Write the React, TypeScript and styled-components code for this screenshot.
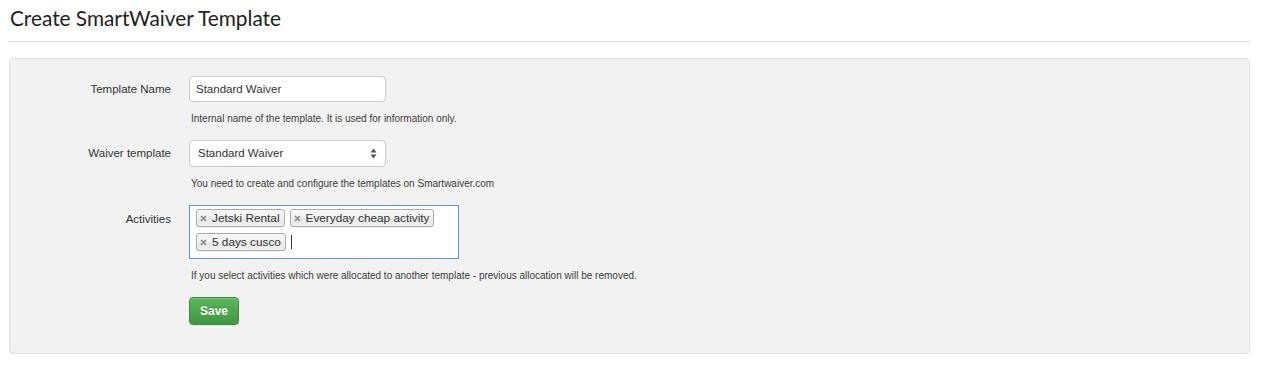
import React from "react";
import styled, { createGlobalStyle } from "styled-components";

const GlobalStyle = createGlobalStyle`
  body {
    margin: 0;
    background: #fff;
    font-family: "Liberation Sans", Arial, sans-serif;
    color: #333;
  }
`;

const Page = styled.div`
  padding: 0 12px 0 9px;
`;

const Title = styled.h2`
  margin: 0;
  padding: 3px 0 0 1px;
  height: 38px;
  font-family: Lato, "Open Sans", sans-serif;
  font-weight: 400;
  font-size: 20.8px;
  line-height: 30px;
  color: #222;
  border-bottom: 1px solid #dcdcdc;
`;

const Panel = styled.div`
  margin-top: 16px;
  background: #f2f2f2;
  border: 1px solid #e0e0e0;
  border-radius: 4px;
  padding: 17px 0 28px;
`;

const Form = styled.form`
  display: grid;
  grid-template-columns: 161px 1fr;
  column-gap: 18px;
  row-gap: 13px;
`;

const Label = styled.label<{ top?: number }>`
  text-align: right;
  font-size: 11.5px;
  line-height: ${(p) => (p.top ? "15px" : "26px")};
  padding-top: ${(p) => p.top ?? 0}px;
  color: #333;
`;

const Control = styled.div`
  display: flex;
  flex-direction: column;
  align-items: flex-start;
`;

const TextInput = styled.div`
  box-sizing: border-box;
  width: 197px;
  height: 26px;
  padding: 0 6px;
  background: #fff;
  border: 1px solid #c8c8c8;
  border-radius: 4px;
  font-size: 11.5px;
  line-height: 24px;
  color: #333;
`;

const SelectBox = styled(TextInput)`
  height: 27px;
  line-height: 25px;
  padding: 0 8px;
  display: flex;
  justify-content: space-between;
  align-items: center;
`;

const Help = styled.div`
  margin-top: 9px;
  font-size: 10px;
  line-height: 16px;
  color: #3c3c3c;
  padding-left: 2px;
`;

const Choices = styled.div`
  box-sizing: border-box;
  width: 270px;
  height: 54px;
  padding: 0 0 0 6px;
  background: #fff;
  border: 1px solid #5897fb;
  display: flex;
  flex-wrap: wrap;
  align-content: flex-start;
  align-items: center;
`;

const Tag = styled.span`
  display: inline-flex;
  align-items: center;
  gap: 5px;
  height: 18px;
  box-sizing: border-box;
  margin: 3px 5px 3px 0;
  padding: 0 4px 0 3px;
  border: 1px solid #aaa;
  border-radius: 3px;
  background: linear-gradient(#f4f4f4 20%, #f0f0f0 50%, #e8e8e8 52%, #eee 100%);
  box-shadow: 0 0 2px #fff inset, 0 1px 0 rgba(0, 0, 0, 0.05);
  font-size: 11.8px;
  line-height: 16px;
  color: #333;
`;

const Caret = styled.span`
  width: 1px;
  height: 14px;
  margin-left: 0;
  background: #333;
`;

const SaveButton = styled.button`
  margin-top: 0;
  width: 50px;
  height: 28px;
  border: 1px solid #3e8f3e;
  border-radius: 4px;
  background: linear-gradient(#5cb85c, #419641);
  color: #fff;
  font-family: "Liberation Sans", Arial, sans-serif;
  font-weight: 700;
  font-size: 12px;
  text-shadow: 0 -1px 0 rgba(0, 0, 0, 0.2);
  box-shadow: inset 0 1px 0 rgba(255, 255, 255, 0.15), 0 1px 1px rgba(0, 0, 0, 0.075);
  cursor: pointer;
`;

const Cross = () => (
  <svg width="7" height="7" viewBox="0 0 7 7">
    <path d="M1 1 L6 6 M6 1 L1 6" stroke="#8c8c8c" strokeWidth="1.7" />
  </svg>
);

const Arrows = () => (
  <svg width="7" height="11" viewBox="0 0 7 11">
    <path d="M3.5 0.5 L6.5 4.5 H0.5 Z M3.5 10.5 L6.5 6.5 H0.5 Z" fill="#555" />
  </svg>
);

const activities = ["Jetski Rental", "Everyday cheap activity", "5 days cusco"];

export default function App() {
  return (
    <Page>
      <GlobalStyle />
      <Title>Create SmartWaiver Template</Title>
      <Panel>
        <Form onSubmit={(e) => e.preventDefault()}>
          <Label>Template Name</Label>
          <Control>
            <TextInput>Standard Waiver</TextInput>
            <Help>Internal name of the template. It is used for information only.</Help>
          </Control>

          <Label>Waiver template</Label>
          <Control>
            <SelectBox>
              <span>Standard Waiver</span>
              <Arrows />
            </SelectBox>
            <Help>You need to create and configure the templates on Smartwaiver.com</Help>
          </Control>

          <Label top={7}>Activities</Label>
          <Control>
            <Choices>
              {activities.map((a) => (
                <Tag key={a}>
                  <Cross />
                  {a}
                </Tag>
              ))}
              <Caret />
            </Choices>
            <Help>
              If you select activities which were allocated to another template - previous allocation will be
              removed.
            </Help>
          </Control>

          <span />
          <Control>
            <SaveButton type="submit">Save</SaveButton>
          </Control>
        </Form>
      </Panel>
    </Page>
  );
}
